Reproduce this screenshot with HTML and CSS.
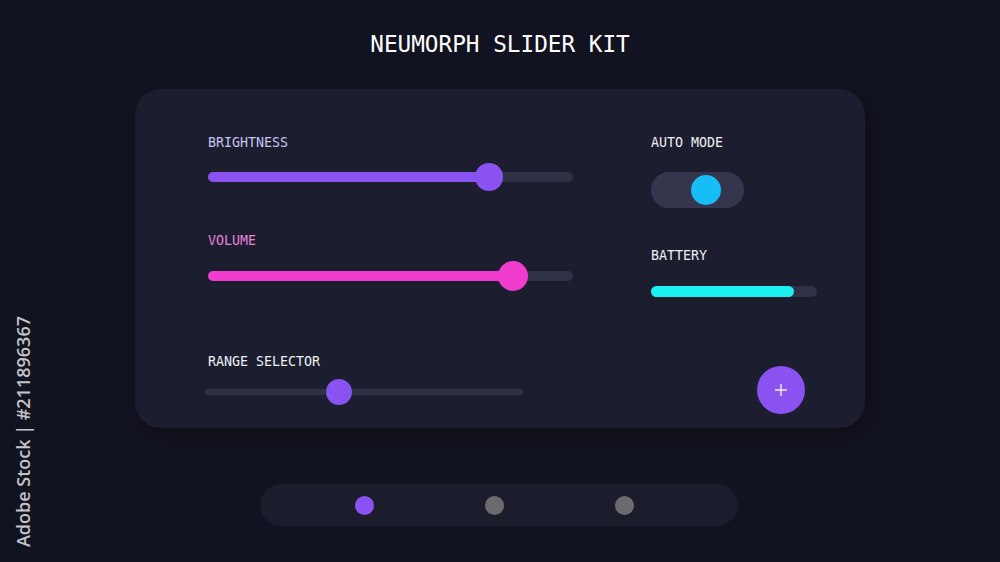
FILE: index.html
```html
<!DOCTYPE html>
<html lang="en">
<head>
    <meta charset="UTF-8">
    <title>Neumorph Slider Kit</title>
    <link rel="stylesheet" href="styles.css">
</head>
<body>
    <div class="page">
        <h1 class="title">NEUMORPH SLIDER KIT</h1>

        <div class="panel">
            <div class="col-left">
                <div class="label label-brightness">BRIGHTNESS</div>
                <div class="slider slider-brightness">
                    <div class="track">
                        <div class="fill" style="width: 77%"></div>
                        <div class="thumb" style="left: 77%"></div>
                    </div>
                </div>

                <div class="label label-volume">VOLUME</div>
                <div class="slider slider-volume">
                    <div class="track">
                        <div class="fill" style="width: 83.5%"></div>
                        <div class="thumb" style="left: 83.5%"></div>
                    </div>
                </div>

                <div class="label label-range">RANGE SELECTOR</div>
                <div class="slider slider-range">
                    <div class="track">
                        <div class="thumb" style="left: 42%"></div>
                    </div>
                </div>
            </div>

            <div class="col-right">
                <div class="label">AUTO MODE</div>
                <div class="toggle">
                    <div class="knob"></div>
                </div>

                <div class="label label-battery">BATTERY</div>
                <div class="battery">
                    <div class="battery-fill" style="width: 86%"></div>
                </div>

                <button class="fab" type="button">
                    <svg width="14" height="14" viewBox="0 0 14 14">
                        <path d="M7 1v12M1 7h12" stroke="#f4eeff" stroke-width="1.4" fill="none"/>
                    </svg>
                </button>
            </div>
        </div>

        <div class="pager">
            <span class="dot dot-active"></span>
            <span class="dot"></span>
            <span class="dot"></span>
        </div>
    </div>

    <div class="stock-id">Adobe Stock | #211896367</div>
</body>
</html>
```

FILE: styles.css
```css
body {
    margin: 0;
    background: #121320;
    font-family: "DejaVu Sans Mono", monospace;
    color: #f0f0f4;
    height: 562px;
    overflow: hidden;
}

.page {
    display: flex;
    flex-direction: column;
    align-items: center;
}

.title {
    margin: 29px 0 0 0;
    height: 30px;
    line-height: 30px;
    font-size: 22.7px;
    font-weight: normal;
    color: #ffffff;
}

.panel {
    margin-top: 30px;
    width: 730px;
    height: 339px;
    box-sizing: border-box;
    padding: 46px 0 0 73px;
    background: #1c1d2e;
    border-radius: 26px;
    box-shadow: 6px 8px 18px rgba(0, 0, 0, 0.25);
    display: flex;
    gap: 78px;
}

.label {
    font-size: 13.3px;
    line-height: 16px;
    height: 16px;
    color: #f0f0f4;
}

.label-brightness {
    color: #c6c4f2;
}

.label-volume {
    color: #e583d7;
    margin-top: 42px;
}

.label-range {
    margin-top: 63px;
}

/* sliders */
.col-left {
    width: 365px;
    display: flex;
    flex-direction: column;
}

.slider {
    display: flex;
    align-items: center;
}

.slider-brightness {
    height: 28px;
    margin-top: 12px;
}

.slider-volume {
    height: 30px;
    margin-top: 12px;
}

.slider-range {
    height: 26px;
    margin-top: 9px;
    margin-left: -3px;
    width: 318px;
}

.track {
    position: relative;
    width: 100%;
    height: 10px;
    border-radius: 5px;
    background: #2f3247;
}

.slider-range .track {
    height: 6px;
    border-radius: 3px;
    background: #2e3146;
}

.fill {
    height: 100%;
    border-radius: 5px;
}

.thumb {
    position: absolute;
    top: 50%;
    width: 28px;
    height: 28px;
    border-radius: 50%;
    transform: translate(-50%, -50%);
}

.slider-brightness .fill,
.slider-brightness .thumb {
    background: #8b52f2;
}

.slider-volume .fill,
.slider-volume .thumb {
    background: #f23ccd;
}

.slider-volume .thumb {
    width: 30px;
    height: 30px;
}

.slider-range .thumb {
    width: 26px;
    height: 26px;
    background: #8b52f2;
}

/* right column */
.col-right {
    width: 166px;
    display: flex;
    flex-direction: column;
}

.toggle {
    margin-top: 21px;
    width: 93px;
    height: 36px;
    border-radius: 18px;
    background: #33364d;
    display: flex;
    align-items: center;
    padding-left: 40px;
    box-sizing: border-box;
}

.knob {
    width: 30px;
    height: 30px;
    border-radius: 50%;
    background: #17bdf5;
}

.label-battery {
    margin-top: 40px;
}

.battery {
    margin-top: 22px;
    height: 11px;
    border-radius: 6px;
    background: #2f3247;
}

.battery-fill {
    height: 100%;
    border-radius: 6px;
    background: #1cf0f0;
}

.fab {
    margin: 69px 0 0 106px;
    width: 48px;
    height: 48px;
    border: none;
    border-radius: 50%;
    background: #8b52f2;
    display: flex;
    align-items: center;
    justify-content: center;
    padding: 0;
}

/* pager */
.pager {
    margin-top: 56px;
    margin-left: -2px;
    width: 478px;
    height: 42px;
    box-sizing: border-box;
    border-radius: 21px;
    background: #1b1c2c;
    display: flex;
    align-items: center;
    gap: 111px;
    padding-left: 95px;
}

.dot {
    width: 19px;
    height: 19px;
    border-radius: 50%;
    background: #6b6b6d;
}

.dot-active {
    background: #8b52f2;
}

.stock-id {
    position: absolute;
    left: 11px;
    top: 316px;
    writing-mode: vertical-rl;
    transform: rotate(180deg);
    font-family: "Open Sans", sans-serif;
    font-size: 18px;
    font-weight: 600;
    color: #c4c4c8;
    white-space: nowrap;
}
```
